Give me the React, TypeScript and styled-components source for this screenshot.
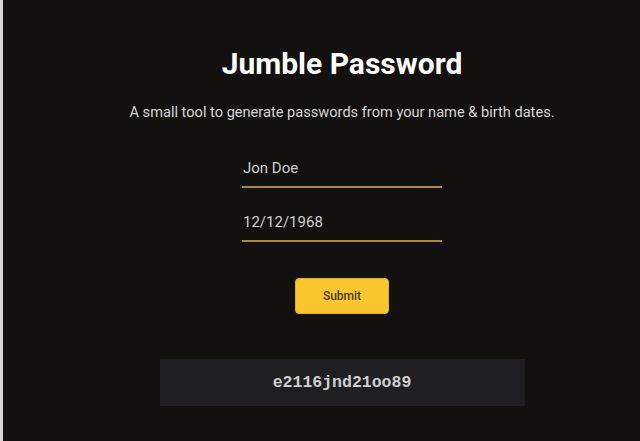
import React, { useState } from "react";
import styled, { createGlobalStyle } from "styled-components";

const GlobalStyle = createGlobalStyle`
    html, body {
        margin: 0;
        padding: 0;
        background-color: #121110;
    }
    * {
        box-sizing: border-box;
    }
`;

const Page = styled.div`
    display: flex;
    min-height: 100vh;
    background-color: #121110;
    font-family: Roboto, "Liberation Sans", sans-serif;
`;

const EdgeStrip = styled.div`
    width: 3px;
    flex-shrink: 0;
    background-color: #d9d9d9;
`;

const Main = styled.main`
    flex: 1;
    display: flex;
    flex-direction: column;
    align-items: center;
    padding-left: 41px;
`;

const Title = styled.h1`
    margin: 46px 0 0;
    font-size: 30px;
    line-height: 35px;
    font-weight: 700;
    color: #ffffff;
`;

const Subtitle = styled.p`
    margin: 21px 0 0;
    font-size: 14.6px;
    line-height: 20px;
    color: #d6d6d6;
`;

const Form = styled.form`
    display: flex;
    flex-direction: column;
    align-items: center;
    width: 200px;
    margin-top: 37px;
`;

const Field = styled.input`
    width: 200px;
    height: 29px;
    margin-bottom: 25px;
    padding: 0 0 9px 1px;
    border: none;
    border-bottom: 2px solid #a8873a;
    background: transparent;
    font-family: Roboto, "Liberation Sans", sans-serif;
    font-size: 15px;
    line-height: 18px;
    color: #cfcfcf;
    outline: none;
`;

const SubmitButton = styled.button`
    width: 94px;
    height: 36px;
    margin-top: 11px;
    border: 1px solid #e2ad1f;
    border-radius: 4px;
    background-color: #fbc62d;
    font-family: Roboto, "Liberation Sans", sans-serif;
    font-size: 12px;
    font-weight: 500;
    color: #4a3a12;
    cursor: pointer;
`;

const Output = styled.div`
    display: flex;
    align-items: center;
    justify-content: center;
    width: 365px;
    height: 47px;
    margin-top: 45px;
    background-color: #1f1e21;
    font-family: "Liberation Mono", "Courier New", monospace;
    font-size: 16.5px;
    font-weight: 700;
    color: #cfcfcf;
`;

const App: React.FC = () => {
    const [name, setName] = useState("Jon Doe");
    const [date, setDate] = useState("12/12/1968");
    const [result] = useState("e2116jnd21oo89");

    return (
        <>
            <GlobalStyle />
            <Page>
                <EdgeStrip />
                <Main>
                    <Title>Jumble Password</Title>
                    <Subtitle>A small tool to generate passwords from your name &amp; birth dates.</Subtitle>
                    <Form onSubmit={(e) => e.preventDefault()}>
                        <Field value={name} onChange={(e) => setName(e.target.value)} />
                        <Field value={date} onChange={(e) => setDate(e.target.value)} />
                        <SubmitButton type='submit'>Submit</SubmitButton>
                    </Form>
                    <Output>{result}</Output>
                </Main>
            </Page>
        </>
    );
};

export default App;
